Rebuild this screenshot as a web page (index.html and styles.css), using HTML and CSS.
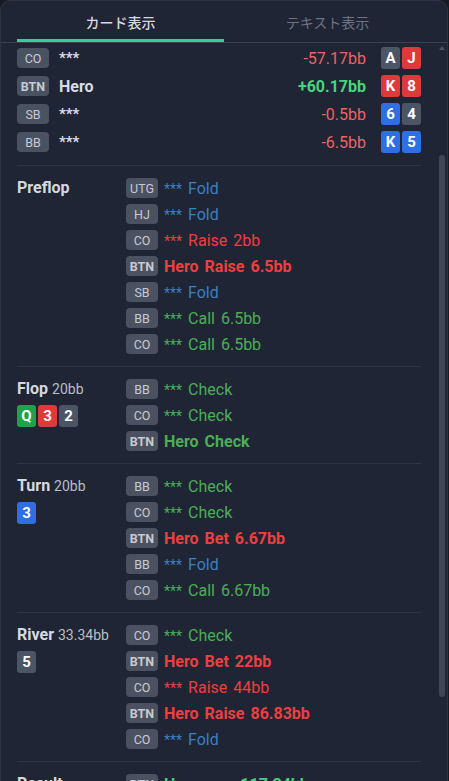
FILE: index.html
```html
<!DOCTYPE html>
<html lang="ja">
<head>
<meta charset="utf-8">
<title>Hand</title>
<link rel="stylesheet" href="styles.css">
</head>
<body>
<div class="panel">
  <div class="tabs">
    <div class="tab active">カード表示</div>
    <div class="tab">テキスト表示</div>
  </div>
  <div class="body">
    <div class="content">
      <div class="players">
        <div class="prow"><span class="pos">CO</span><span class="pname">***</span><span class="amt neg">-57.17bb</span><span class="cards"><span class="card gray">A</span><span class="card red">J</span></span></div>
        <div class="prow"><span class="pos b">BTN</span><span class="pname hero">Hero</span><span class="amt pos-amt">+60.17bb</span><span class="cards"><span class="card red">K</span><span class="card red">8</span></span></div>
        <div class="prow"><span class="pos">SB</span><span class="pname">***</span><span class="amt neg">-0.5bb</span><span class="cards"><span class="card blue">6</span><span class="card gray">4</span></span></div>
        <div class="prow"><span class="pos">BB</span><span class="pname">***</span><span class="amt neg">-6.5bb</span><span class="cards"><span class="card blue">K</span><span class="card blue">5</span></span></div>
      </div>

      <div class="street">
        <div class="sinfo"><div class="stitle">Preflop</div></div>
        <div class="actions">
          <div class="act"><span class="pos">UTG</span><span class="atext blue-t"><span class="st">***</span> Fold</span></div>
          <div class="act"><span class="pos">HJ</span><span class="atext blue-t"><span class="st">***</span> Fold</span></div>
          <div class="act"><span class="pos">CO</span><span class="atext red-t"><span class="st">***</span> Raise 2bb</span></div>
          <div class="act"><span class="pos b">BTN</span><span class="atext red-t hero-t">Hero Raise 6.5bb</span></div>
          <div class="act"><span class="pos">SB</span><span class="atext blue-t"><span class="st">***</span> Fold</span></div>
          <div class="act"><span class="pos">BB</span><span class="atext green-t"><span class="st">***</span> Call 6.5bb</span></div>
          <div class="act"><span class="pos">CO</span><span class="atext green-t"><span class="st">***</span> Call 6.5bb</span></div>
        </div>
      </div>

      <div class="street">
        <div class="sinfo">
          <div class="stitle">Flop <span class="pot">20bb</span></div>
          <div class="board"><span class="card green">Q</span><span class="card red">3</span><span class="card gray">2</span></div>
        </div>
        <div class="actions">
          <div class="act"><span class="pos">BB</span><span class="atext green-t"><span class="st">***</span> Check</span></div>
          <div class="act"><span class="pos">CO</span><span class="atext green-t"><span class="st">***</span> Check</span></div>
          <div class="act"><span class="pos b">BTN</span><span class="atext green-t hero-t">Hero Check</span></div>
        </div>
      </div>

      <div class="street">
        <div class="sinfo">
          <div class="stitle">Turn <span class="pot">20bb</span></div>
          <div class="board"><span class="card blue">3</span></div>
        </div>
        <div class="actions">
          <div class="act"><span class="pos">BB</span><span class="atext green-t"><span class="st">***</span> Check</span></div>
          <div class="act"><span class="pos">CO</span><span class="atext green-t"><span class="st">***</span> Check</span></div>
          <div class="act"><span class="pos b">BTN</span><span class="atext red-t hero-t">Hero Bet 6.67bb</span></div>
          <div class="act"><span class="pos">BB</span><span class="atext blue-t"><span class="st">***</span> Fold</span></div>
          <div class="act"><span class="pos">CO</span><span class="atext green-t"><span class="st">***</span> Call 6.67bb</span></div>
        </div>
      </div>

      <div class="street">
        <div class="sinfo">
          <div class="stitle">River <span class="pot">33.34bb</span></div>
          <div class="board"><span class="card gray">5</span></div>
        </div>
        <div class="actions">
          <div class="act"><span class="pos">CO</span><span class="atext green-t"><span class="st">***</span> Check</span></div>
          <div class="act"><span class="pos b">BTN</span><span class="atext red-t hero-t">Hero Bet 22bb</span></div>
          <div class="act"><span class="pos">CO</span><span class="atext red-t"><span class="st">***</span> Raise 44bb</span></div>
          <div class="act"><span class="pos b">BTN</span><span class="atext red-t hero-t">Hero Raise 86.83bb</span></div>
          <div class="act"><span class="pos">CO</span><span class="atext blue-t"><span class="st">***</span> Fold</span></div>
        </div>
      </div>

      <div class="street last">
        <div class="sinfo"><div class="stitle">Result</div></div>
        <div class="actions">
          <div class="act"><span class="pos b">BTN</span><span class="atext win-t hero-t">Hero won 117.34bb</span></div>
        </div>
      </div>
    </div>
    <div class="scrollbar">
      <div class="arrow up"></div>
      <div class="track"><div class="thumb"></div></div>
      <div class="arrow down"></div>
    </div>
  </div>
</div>
</body>
</html>
```

FILE: styles.css
```css
* { box-sizing: border-box; }
html, body {
  margin: 0;
  padding: 0;
  background: #161a22;
  overflow: hidden;
}
body {
  width: 449px;
  height: 781px;
  font-family: Roboto, "Noto Sans CJK JP", sans-serif;
  color: #e4e6eb;
}
.panel {
  width: 448px;
  height: 800px;
  background: #1f2535;
  border: 1px solid #2c3342;
  border-radius: 10px 10px 0 0;
  overflow: hidden;
  display: flex;
  flex-direction: column;
}
.tabs {
  display: flex;
  padding-left: 16px;
  height: 42px;
  border-bottom: 1px solid #3a4150;
  flex: none;
}
.tab {
  width: 207px;
  height: 41px;
  display: flex;
  align-items: center;
  justify-content: center;
  font-size: 14px;
  color: #6e7480;
  border-bottom: 3px solid transparent;
  padding-top: 3px;
}
.tab.active {
  color: #d6d9df;
  font-weight: 500;
  border-bottom-color: #2fd19d;
}
.body {
  display: flex;
  flex: 1;
  min-height: 0;
}
.content {
  width: 436px;
  padding: 0 16px;
  overflow: hidden;
}
.players {
  padding: 4px 0 12px;
  display: flex;
  flex-direction: column;
  gap: 6px;
  border-bottom: 1px solid #2d3444;
}
.prow {
  display: flex;
  align-items: center;
  height: 22px;
}
.pos {
  flex: none;
  width: 32px;
  height: 20px;
  border-radius: 4px;
  background: #4a5262;
  color: #c6cad2;
  font-size: 12.5px;
  display: flex;
  align-items: center;
  justify-content: center;
}
.pos.b { font-weight: 700; }
.pname {
  margin-left: 10px;
  flex: 1;
  font-size: 15px;
  color: #d9dce2;
  font-weight: 700;
}
.pname.hero { font-size: 16px; }
.amt {
  font-size: 16px;
  margin-right: 15px;
}
.amt.neg { color: #ee6363; }
.amt.pos-amt { color: #48d47c; font-weight: 700; }
.cards, .board {
  display: flex;
  gap: 2px;
}
.card {
  width: 19px;
  height: 22px;
  border-radius: 3px;
  color: #ffffff;
  font-weight: 700;
  font-size: 15px;
  display: flex;
  align-items: center;
  justify-content: center;
}
.card.gray { background: #4c5566; }
.card.red { background: #de3a3a; }
.card.blue { background: #2f6fe4; }
.card.green { background: #1fa24a; }
.street {
  display: flex;
  padding: 12px 0;
  border-bottom: 1px solid #2d3444;
}
.sinfo {
  width: 109px;
  flex: none;
}
.stitle {
  height: 20px;
  line-height: 20px;
  font-size: 16px;
  font-weight: 700;
  color: #d6d9df;
}
.pot {
  font-size: 14px;
  font-weight: 400;
  color: #b9bdc5;
}
.board { margin-top: 6px; }
.actions {
  display: flex;
  flex-direction: column;
  gap: 6px;
}
.act {
  display: flex;
  align-items: center;
  height: 20px;
}
.atext {
  margin-left: 6px;
  font-size: 16px;
  word-spacing: 2px;
  white-space: nowrap;
}
.st { font-size: 14px; }
.hero-t { font-weight: 700; }
.blue-t { color: #3b7fc3; }
.red-t { color: #ee3f3f; }
.green-t { color: #4cae55; }
.win-t { color: #44d07a; }
.scrollbar {
  width: 10px;
  flex: none;
  display: flex;
  flex-direction: column;
  align-items: center;
}
.arrow {
  height: 10px;
  flex: none;
  display: flex;
  align-items: center;
  justify-content: center;
  width: 100%;
}
.arrow::before {
  content: "";
  border-left: 3px solid transparent;
  border-right: 3px solid transparent;
}
.arrow.up::before { border-bottom: 4px solid #4e5563; }
.arrow.down::before { border-top: 4px solid #4e5563; }
.track {
  flex: 1;
  width: 100%;
  display: flex;
  justify-content: center;
}
.thumb {
  margin-top: 102px;
  width: 6px;
  height: 542px;
  border-radius: 3px;
  background: #3f4654;
}
```
